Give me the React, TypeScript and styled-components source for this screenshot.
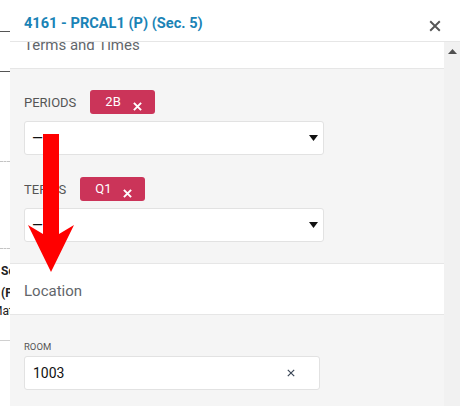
import React from "react";
import styled, { createGlobalStyle } from "styled-components";

const GlobalStyle = createGlobalStyle`
  html, body { margin: 0; padding: 0; }
  body {
    width: 460px;
    height: 406px;
    overflow: hidden;
    font-family: Roboto, "Liberation Sans", Arial, sans-serif;
    background: #ffffff;
  }
  * { box-sizing: border-box; }
`;

const Page = styled.div`
  position: relative;
  display: flex;
  width: 460px;
  height: 406px;
  overflow: hidden;
`;

const BgStrip = styled.div`
  width: 10px;
  flex: none;
  overflow: hidden;
  display: flex;
  flex-direction: column;
  background: #fff;
`;

const BgRule = styled.div<{ $top: number; $dashed?: boolean; $color: string }>`
  flex: none;
  margin-top: ${(p) => p.$top}px;
  height: 0;
  border-top: 1px ${(p) => (p.$dashed ? "dashed" : "solid")} ${(p) => p.$color};
`;

const BgText = styled.div<{ $top: number; $bold?: boolean; $shift?: number }>`
  flex: none;
  margin-top: ${(p) => p.$top}px;
  margin-left: ${(p) => p.$shift ?? 1}px;
  font-size: 12px;
  line-height: 14px;
  white-space: nowrap;
  font-weight: ${(p) => (p.$bold ? 700 : 400)};
  color: #222;
`;

const Modal = styled.div`
  flex: 1;
  display: flex;
  flex-direction: column;
  background: #fff;
  min-width: 0;
`;

const Header = styled.div`
  flex: none;
  height: 42px;
  display: flex;
  align-items: center;
  justify-content: space-between;
  padding: 0 19px 0 14px;
  border-bottom: 1px solid #e6e6e6;
`;

const Title = styled.div`
  color: #1a83b6;
  font-size: 14.6px;
  font-weight: 700;
  margin-top: 4px;
`;

const CloseButton = styled.button`
  border: none;
  background: none;
  padding: 0;
  width: 12px;
  height: 12px;
  display: flex;
  margin-top: 10px;
  cursor: pointer;
`;

const Body = styled.div`
  flex: 1;
  display: flex;
  min-height: 0;
`;

const Viewport = styled.div`
  flex: 1;
  overflow: hidden;
  background: #f5f5f5;
`;

const Scrolled = styled.div`
  margin-top: -25px;
`;

const Scrollbar = styled.div`
  width: 16px;
  flex: none;
  background: #f1f1f1;
  display: flex;
  justify-content: center;
  padding-top: 7px;
`;

const SectionHeader = styled.div`
  height: 52px;
  display: flex;
  align-items: center;
  padding: 4px 14px 0;
  background: #fff;
  border-top: 1px solid #e6e6e6;
  border-bottom: 1px solid #e6e6e6;
  color: #62666b;
  font-size: 15px;
`;

const SectionBody = styled.div<{ $pt: number; $pb: number }>`
  padding: ${(p) => p.$pt}px 0 ${(p) => p.$pb}px 14px;
  display: flex;
  flex-direction: column;
`;

const Field = styled.div<{ $last?: boolean }>`
  display: flex;
  flex-direction: column;
  margin-bottom: ${(p) => (p.$last ? 0 : 22)}px;
`;

const LabelRow = styled.div`
  display: flex;
  align-items: center;
  height: 24px;
  margin-bottom: 7px;
`;

const Label = styled.span`
  font-size: 13px;
  color: #555;
  text-transform: uppercase;
`;

const SmallLabel = styled.span`
  font-size: 9.5px;
  color: #555;
  text-transform: uppercase;
  line-height: 12px;
  margin-bottom: 3px;
`;

const Tag = styled.span<{ $gap: number }>`
  display: inline-flex;
  align-items: center;
  height: 24px;
  margin-left: ${(p) => p.$gap}px;
  padding: 0 13px 0 15px;
  background: #cb3459;
  border-radius: 3px;
  color: #fff;
  font-size: 13px;
  gap: 12px;
`;

const TagText = styled.span`
  margin-top: -1px;
`;

const TagX = styled.span`
  display: flex;
  margin-top: 8px;
`;

const Select = styled.div`
  width: 300px;
  height: 34px;
  background: #fff;
  border: 1px solid #e2e2e2;
  border-radius: 3px;
  display: flex;
  align-items: center;
  justify-content: space-between;
  padding: 0 5px 0 7px;
  color: #111;
  font-size: 14px;
`;

const Input = styled.div`
  width: 296px;
  height: 34px;
  background: #fff;
  border: 1px solid #e2e2e2;
  border-radius: 3px;
  display: flex;
  align-items: center;
  justify-content: space-between;
  padding: 0 24px 0 8px;
  color: #111;
  font-size: 14px;
`;

const Overlay = styled.svg`
  position: absolute;
  left: 0;
  top: 0;
  pointer-events: none;
`;

const XIcon = ({ size, color, width }: { size: number; color: string; width: number }) => (
  <svg width={size} height={size} viewBox="0 0 10 10">
    <path d="M1 1 L9 9 M9 1 L1 9" stroke={color} strokeWidth={width} strokeLinecap="butt" />
  </svg>
);

const Caret = () => (
  <svg width="9" height="6" viewBox="0 0 9 6">
    <path d="M0 0 H9 L4.5 6 Z" fill="#111" />
  </svg>
);

export default function App() {
  return (
    <>
      <GlobalStyle />
      <Page>
        <BgStrip>
          <BgRule $top={31} $color="#555" />
          <BgRule $top={39} $color="#555" />
          <BgRule $top={89} $dashed $color="#c4c4c4" />
          <BgRule $top={86} $dashed $color="#c4c4c4" />
          <BgText $top={15} $bold>Sc</BgText>
          <BgText $top={8} $bold>(P</BgText>
          <BgText $top={4} $shift={-8}>Math</BgText>
          <BgRule $top={22} $color="#d0d0d0" />
        </BgStrip>
        <Modal>
          <Header>
            <Title>4161 - PRCAL1 (P) (Sec. 5)</Title>
            <CloseButton aria-label="Close">
              <XIcon size={12} color="#555" width={1.6} />
            </CloseButton>
          </Header>
          <Body>
            <Viewport>
              <Scrolled>
                <SectionHeader>Terms and Times</SectionHeader>
                <SectionBody $pt={21} $pb={21}>
                  <Field>
                    <LabelRow>
                      <Label>Periods</Label>
                      <Tag $gap={14}>
                        <TagText>2B</TagText>
                        <TagX><XIcon size={9} color="#fff" width={2.2} /></TagX>
                      </Tag>
                    </LabelRow>
                    <Select>
                      <span>—</span>
                      <Caret />
                    </Select>
                  </Field>
                  <Field $last>
                    <LabelRow>
                      <Label>Terms</Label>
                      <Tag $gap={14}>
                        <TagText>Q1</TagText>
                        <TagX><XIcon size={9} color="#fff" width={2.2} /></TagX>
                      </Tag>
                    </LabelRow>
                    <Select>
                      <span>—</span>
                      <Caret />
                    </Select>
                  </Field>
                </SectionBody>
                <SectionHeader>Location</SectionHeader>
                <SectionBody $pt={26} $pb={20}>
                  <SmallLabel>Room</SmallLabel>
                  <Input>
                    <span>1003</span>
                    <XIcon size={8} color="#3b4757" width={1.5} />
                  </Input>
                </SectionBody>
              </Scrolled>
            </Viewport>
            <Scrollbar>
              <svg width="9" height="5" viewBox="0 0 9 5">
                <path d="M0 5 L4.5 0 L9 5 Z" fill="#505050" />
              </svg>
            </Scrollbar>
          </Body>
        </Modal>
        <Overlay width="460" height="406" viewBox="0 0 460 406">
          <polygon points="43,134 59,134 59,234 74,225 51,272 28,225 43,234" fill="#ff0000" />
        </Overlay>
      </Page>
    </>
  );
}
